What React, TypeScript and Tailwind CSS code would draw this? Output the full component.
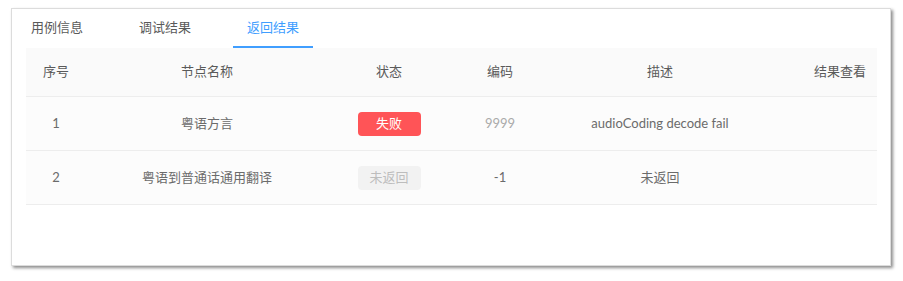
import React from 'react';

const font = { fontFamily: 'Lato, "Noto Sans CJK SC", sans-serif' };

const tabs = ['用例信息', '调试结果', '返回结果'];

const rows = [
  { idx: '1', name: '粤语方言', status: 'fail', code: '9999', desc: 'audioCoding decode fail' },
  { idx: '2', name: '粤语到普通话通用翻译', status: 'none', code: '-1', desc: '未返回' },
];

const cols = 'grid grid-cols-[60px_242px_122px_100px_220px_1fr] items-center';

export default function App() {
  return (
    <div className="w-[903px] h-[281px] bg-white pl-[11px] pt-[8px]" style={font}>
      <div className="w-[880px] h-[258px] bg-white border border-[#dcdcdc] shadow-[2px_2px_3px_rgba(0,0,0,0.45)]">
        {/* tabs */}
        <div className="flex h-[39px] pl-[5px] gap-[28px] text-[13px] pt-[1px]">
          {tabs.map((t, i) => (
            <div
              key={t}
              className={
                'px-[14px] flex items-center border-b-2 ' +
                (i === 2 ? 'text-[#409eff] border-[#409eff]' : 'text-[#5a5a5a] border-transparent')
              }
            >
              {t}
            </div>
          ))}
        </div>

        {/* table */}
        <div className="ml-[14px] mr-[13px] text-[13px]">
          <div className={cols + ' h-[49px] bg-[#fafafa] border-b border-[#ededed] text-[#5a5a5a]'}>
            <div className="text-center">序号</div>
            <div className="text-center">节点名称</div>
            <div className="text-center">状态</div>
            <div className="text-center">编码</div>
            <div className="text-center">描述</div>
            <div className="text-right pr-[11px]">结果查看</div>
          </div>
          {rows.map((r) => (
            <div key={r.idx} className={cols + ' h-[54px] bg-[#fcfcfc] border-b border-[#ededed] text-[#6b6b6b]'}>
              <div className="text-center">{r.idx}</div>
              <div className="text-center">{r.name}</div>
              <div className="flex justify-center">
                {r.status === 'fail' ? (
                  <span className="w-[63px] h-[24px] rounded-[4px] bg-[#ff5457] text-white flex items-center justify-center">
                    失败
                  </span>
                ) : (
                  <span className="w-[63px] h-[24px] rounded-[4px] bg-[#f2f2f2] text-[#bdbdbd] flex items-center justify-center">
                    未返回
                  </span>
                )}
              </div>
              <div className={'text-center ' + (r.code === '9999' ? 'text-[#aaa]' : '')}>{r.code}</div>
              <div className="text-center">{r.desc}</div>
              <div></div>
            </div>
          ))}
        </div>
      </div>
    </div>
  );
}
